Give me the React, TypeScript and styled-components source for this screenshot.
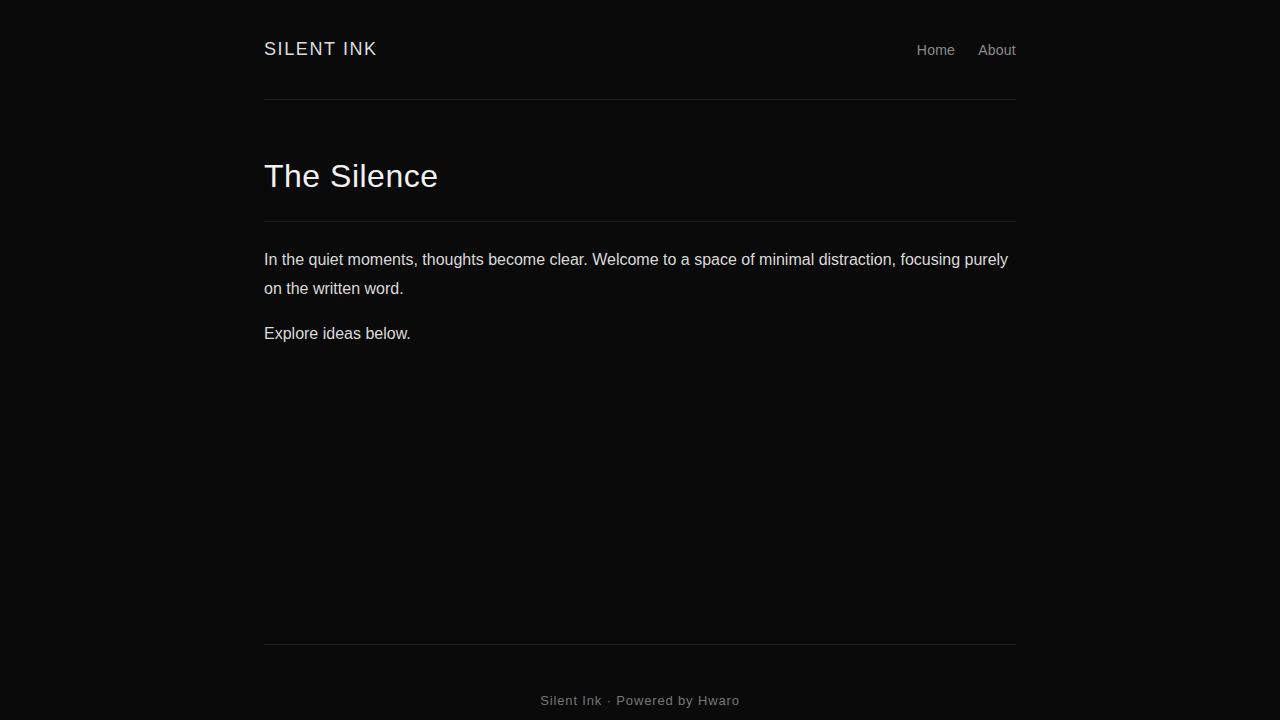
import styled, { createGlobalStyle } from 'styled-components'

const GlobalStyle = createGlobalStyle`
  html, body {
    margin: 0;
    padding: 0;
    background: #0a0a0a;
  }
  body {
    font-family: "Liberation Sans", Arial, sans-serif;
    color: #dcdcdc;
  }
`

const Container = styled.div`
  max-width: 752px;
  margin: 0 auto;
`

const Header = styled.header`
  display: flex;
  justify-content: space-between;
  align-items: center;
  padding: 36px 0;
  border-bottom: 1px solid #222;
`

const Logo = styled.a`
  font-size: 18px;
  line-height: 27px;
  letter-spacing: 1.6px;
  color: #dedede;
  text-decoration: none;
  text-transform: uppercase;
`

const Nav = styled.nav`
  display: flex;
  gap: 23px;
  padding-top: 1px;
`

const NavLink = styled.a`
  font-size: 14px;
  letter-spacing: 0.25px;
  color: #8a8a8a;
  text-decoration: none;
`

const Main = styled.main`
  min-height: 487px;
  padding-top: 57px;
`

const Title = styled.h1`
  margin: 0 0 23px;
  padding-bottom: 26px;
  font-size: 32px;
  line-height: 38px;
  font-weight: 400;
  letter-spacing: 0.5px;
  color: #f2f2f2;
  border-bottom: 1px solid #1f1f1f;
`

const Paragraph = styled.p`
  margin: 0 0 16px;
  font-size: 16px;
  line-height: 29px;
  color: #dadada;
`

const Footer = styled.footer`
  padding: 44px 0;
  border-top: 1px solid #222;
  text-align: center;
  font-size: 13px;
  line-height: 23px;
  letter-spacing: 0.85px;
  color: #777;
`

const App = () => {
  return (
    <>
      <GlobalStyle />
      <Container>
        <Header>
          <Logo href="#">Silent Ink</Logo>
          <Nav>
            <NavLink href="#">Home</NavLink>
            <NavLink href="#">About</NavLink>
          </Nav>
        </Header>
        <Main>
          <Title>The Silence</Title>
          <Paragraph>
            In the quiet moments, thoughts become clear. Welcome to a space of minimal
            distraction, focusing purely on the written word.
          </Paragraph>
          <Paragraph>Explore ideas below.</Paragraph>
        </Main>
        <Footer>Silent Ink · Powered by Hwaro</Footer>
      </Container>
    </>
  )
}

export default App
